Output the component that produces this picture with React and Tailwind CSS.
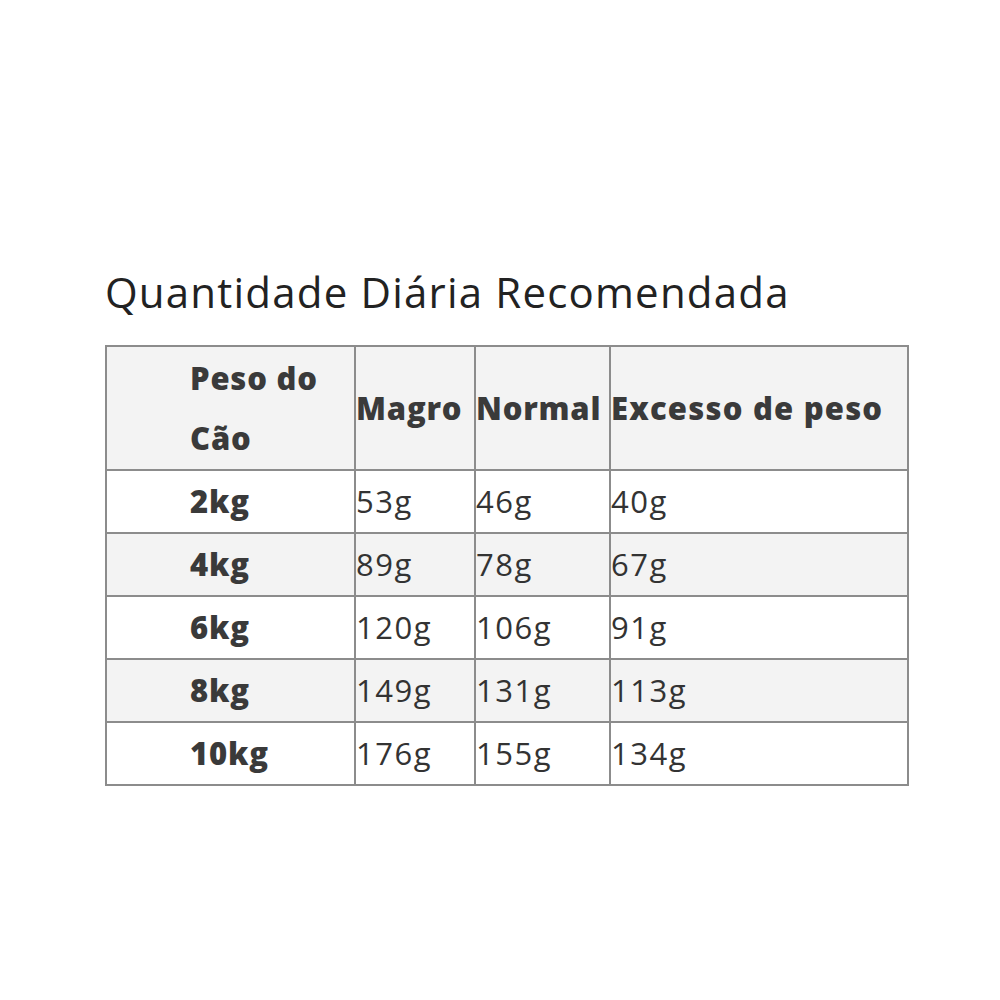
import React from 'react';

const rows = [
  { peso: '2kg', magro: '53g', normal: '46g', excesso: '40g' },
  { peso: '4kg', magro: '89g', normal: '78g', excesso: '67g' },
  { peso: '6kg', magro: '120g', normal: '106g', excesso: '91g' },
  { peso: '8kg', magro: '149g', normal: '131g', excesso: '113g' },
  { peso: '10kg', magro: '176g', normal: '155g', excesso: '134g' },
];

const cell = 'border-2 border-[#8c8c8c] p-0 align-middle whitespace-nowrap';
const head = `${cell} text-left font-extrabold tracking-[0.8px] text-[#3a3a3a]`;

const App = () => {
  return (
    <div className="w-[1000px] h-[1000px] bg-white font-['Open_Sans',sans-serif] text-[#333]">
      <div className="pt-[263px] pl-[105px]">
        <h2 className="text-[42px] leading-[58px] font-normal text-[#222] tracking-[1.2px]">
          Quantidade Diária Recomendada
        </h2>
        <table className="mt-[24px] border-collapse table-fixed w-[802px] text-[31px] tracking-[1.5px]">
          <colgroup>
            <col className="w-[249px]" />
            <col className="w-[120px]" />
            <col className="w-[135px]" />
            <col className="w-[298px]" />
          </colgroup>
          <thead>
            <tr className="bg-[#f3f3f3] h-[124px]">
              <th className={`${head} pl-[83px] leading-[60px]`}>
                Peso do
                <br />
                Cão
              </th>
              <th className={head}>Magro</th>
              <th className={head}>Normal</th>
              <th className={`${head} tracking-[1.2px]`}>Excesso de peso</th>
            </tr>
          </thead>
          <tbody>
            {rows.map((r, i) => (
              <tr key={r.peso} className={`h-[63px] ${i % 2 === 1 ? 'bg-[#f3f3f3]' : 'bg-white'}`}>
                <td className={`${cell} font-extrabold tracking-[0.8px] text-[#3a3a3a] pl-[83px]`}>{r.peso}</td>
                <td className={cell}>{r.magro}</td>
                <td className={cell}>{r.normal}</td>
                <td className={cell}>{r.excesso}</td>
              </tr>
            ))}
          </tbody>
        </table>
      </div>
    </div>
  );
};

export default App;
